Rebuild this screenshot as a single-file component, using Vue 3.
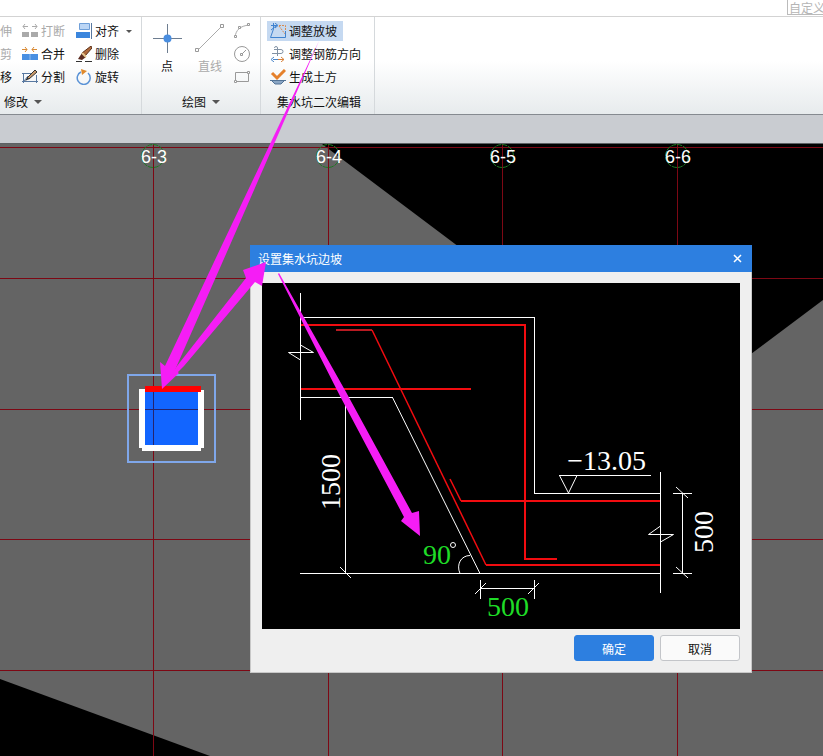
<script setup>
import { ref } from 'vue';

const search = ref('')
const opened = ref(true)
const active = ref('slope')

const columns = [153, 328, 502, 677]
const rows = [3, 134, 265, 395, 526]
const axes = ['6-3', '6-4', '6-5', '6-6']

function openDialog() {
    active.value = 'slope'
    opened.value = true
}

function closeDialog() {
    opened.value = false
}
</script>

<template>
    <div class="page">
        <header class="top">
            <input v-model="search" class="search" type="text" placeholder="自定义" aria-label="自定义">
        </header>

        <nav class="ribbon">
            <section class="group modify">
                <div class="tools">
                    <div class="col first">
                        <button class="tool" disabled>伸</button>
                        <button class="tool" disabled>剪</button>
                        <button class="tool">移</button>
                    </div>
                    <div class="col second">
                        <button class="tool" disabled>
                            <svg width="16" height="16" viewBox="0 0 16 16">
                                <path d="M0 9h7v5H0zM9 9h7v5H9z" fill="#aaa" />
                                <path d="M1 3.500h5M3 1L1 3.500 3 6M10 3.500h5M13 1l2 2.500L13 6" fill="none" stroke="#aaa" />
                            </svg>打断
                        </button>
                        <button class="tool">
                            <svg width="16" height="16" viewBox="0 0 16 16">
                                <path d="M0 8h16v6H0z" fill="#4a90e2" />
                                <path d="M8 8v6" stroke="#8fbdf0" />
                                <path d="M0 3.500h5M3 1l2 2.500L3 6M10 3.500h5M12 1l-2 2.500L12 6" fill="none" stroke="#d98a35" />
                            </svg>合并
                        </button>
                        <button class="tool">
                            <svg width="16" height="16" viewBox="0 0 16 16">
                                <path d="M0 4.500h9M0 12.500h16M1.500 4v10M14.500 6v8M2 12l4-5" fill="none" stroke="#5878a0" />
                                <path d="M5 9l8-8 2 2-8 7z" fill="#c99a6a" stroke="#333" />
                                <path d="M3 12l2-3 2 1z" fill="#222" />
                            </svg>分割
                        </button>
                    </div>
                    <div class="col third">
                        <button class="tool">
                            <svg width="16" height="16" viewBox="0 0 16 16">
                                <path d="M3.500.500h10v6h-10z" fill="#bcd6f5" stroke="#6f9fd8" />
                                <path d="M0 9h14v6H0z" fill="#3b86dd" />
                                <path d="M15.500 0v16" stroke="#5878a0" />
                            </svg>对齐<i class="caret"></i>
                        </button>
                        <button class="tool">
                            <svg width="16" height="16" viewBox="0 0 16 16">
                                <path d="M15 0l1 2-7 8-3-3z" fill="#b06a3c" stroke="#5a3018" />
                                <path d="M6 7l4 4-4 3-4-1z" fill="#5c2c20" />
                                <path d="M6 7l4 4" stroke="#e8c890" stroke-width="2" />
                                <path d="M0 15.500h6M9 15.500h7" stroke="#333" />
                            </svg>删除
                        </button>
                        <button class="tool">
                            <svg width="16" height="16" viewBox="0 0 16 16">
                                <path d="M5 3a6.500 6.500 0 1 0 7 1" fill="none" stroke="#5b93d6" stroke-width="1.500" />
                                <path d="M5 0l6 2-5 4z" fill="#e08a2c" />
                            </svg>旋转
                        </button>
                    </div>
                </div>
                <button class="caption">修改<i class="caret big"></i></button>
            </section>

            <section class="group draw">
                <div class="tools">
                    <button class="large">
                        <svg width="30" height="30" viewBox="0 0 30 30">
                            <path d="M15.500 1v29M1 15.500h29" stroke="#6d7d90" />
                            <circle cx="15.500" cy="15.500" r="4" fill="#4a8ee0" />
                        </svg>
                        <span>点</span>
                    </button>
                    <button class="large" disabled>
                        <svg width="30" height="30" viewBox="0 0 30 30">
                            <path d="M3 27L27 3" stroke="#aaa" />
                            <path d="M.5 25.500h3v3h-3zM25.500 1.500h3v3h-3z" fill="#fff" stroke="#999" />
                        </svg>
                        <span>直线</span>
                    </button>
                    <div class="col shapes">
                        <button class="tool" disabled aria-label="弧">
                            <svg width="18" height="18" viewBox="0 0 18 18">
                                <path d="M2 15C3 8 7 4 16 3" fill="none" stroke="#aaa" />
                                <path d="M1.500 13.500h2v2h-2zM5.500 4.500h2v2h-2zM14.500 1.500h2v2h-2z" fill="#fff" stroke="#999" />
                            </svg>
                        </button>
                        <button class="tool" disabled aria-label="圆">
                            <svg width="18" height="18" viewBox="0 0 18 18">
                                <circle cx="9" cy="9" r="7.500" fill="none" stroke="#999" />
                                <path d="M9 9l4-4" stroke="#999" />
                                <path d="M7.500 8.500h2v2h-2z" fill="#fff" stroke="#999" />
                            </svg>
                        </button>
                        <button class="tool" disabled aria-label="矩形">
                            <svg width="18" height="18" viewBox="0 0 18 18">
                                <path d="M2.500 4.500h13v9h-13z" fill="none" stroke="#999" />
                                <path d="M1.500 12.500h2v2h-2zM14.500 3.500h2v2h-2z" fill="#fff" stroke="#999" />
                            </svg>
                        </button>
                    </div>
                </div>
                <button class="caption">绘图<i class="caret big"></i></button>
            </section>

            <section class="group pit">
                <div class="tools">
                    <div class="col">
                        <button class="tool" :class="{ active: active == 'slope' }" @click="openDialog()">
                            <svg width="16" height="16" viewBox="0 0 16 16">
                                <path d="M1 2.500h6M3.500 0v6L.5 14.500h15V8" fill="none" stroke="#3f82cf" />
                                <path d="M1 7l5-4M5 0l3 2.500L5 5" fill="none" stroke="#3f82cf" />
                                <path d="M9 2.500h6.500V8M9 3l6 8" fill="none" stroke="#d88b50" stroke-dasharray="2 1" />
                            </svg>调整放坡
                        </button>
                        <button class="tool">
                            <svg width="16" height="16" viewBox="0 0 16 16">
                                <path d="M2 7.500h9a2 2 0 0 0 0-4H4M7.500 10V2a1.500 1.500 0 0 0-3 0" fill="none" stroke="#8292a4" />
                                <path d="M3 13.500h11" stroke="#4b86c9" />
                                <path d="M4 11l-3 2.500L4 16" fill="none" stroke="#4b86c9" />
                                <path d="M8 13.500h6M11 11l3 2.500-3 2.500" fill="none" stroke="#d9823b" />
                            </svg>调整钢筋方向
                        </button>
                        <button class="tool">
                            <svg width="16" height="16" viewBox="0 0 16 16">
                                <path d="M0 11.500h16M2 12l3 3h6l3-3" fill="#8ba6c4" stroke="#527396" />
                                <path d="M2 4l5 5 8-8" fill="none" stroke="#e5812c" stroke-width="3" />
                            </svg>生成土方
                        </button>
                    </div>
                </div>
                <div class="caption">集水坑二次编辑</div>
            </section>
        </nav>

        <div class="band"></div>

        <main class="workspace">
            <svg class="model" width="100%" height="100%">
                <polygon points="322,0 3000,0 3000,-1480 823,156 676,266" fill="#000" />
                <polygon points="0,535 900,865 0,865" fill="#000" />
                <g fill="#7d0814">
                    <rect v-for="x in columns" :key="x" :x="x" y="0" width="1" height="100%" />
                    <rect v-for="y in rows" :key="y" x="0" :y="y" width="100%" height="1" />
                </g>
                <g v-for="(name, i) in axes" :key="name">
                    <circle :cx="columns[i]" cy="12" r="11.500" fill="none" stroke="#1c7a22" stroke-dasharray="5 1" />
                    <text class="axis" :x="columns[i] + 1" y="19">{{ name }}</text>
                </g>
                <g shape-rendering="crispEdges">
                    <rect x="128" y="231" width="87" height="87" fill="none" stroke="#7fa7ea" stroke-width="2" />
                    <path d="M139 245h6v56h53v-55h6v58h-3v3h-59v-3h-3z" fill="#fff" />
                    <rect x="145" y="247" width="53" height="54" fill="#1265ff" />
                    <path d="M153.500 247v54M145 265.500h53" stroke="#25246e" />
                    <rect x="145" y="242" width="56" height="6" fill="#f00" />
                </g>
            </svg>

            <section v-if="opened" class="dialog" role="dialog" aria-labelledby="dialog-title">
                <div class="title">
                    <span id="dialog-title">设置集水坑边坡</span>
                    <button class="close" aria-label="关闭" @click="closeDialog()">
                        <svg width="9" height="9" viewBox="0 0 9 9">
                            <path d="M1 1l7 7M8 1L1 8" stroke="#fff" stroke-width="1.500" />
                        </svg>
                    </button>
                </div>
                <div class="body">
                    <svg class="section" viewBox="262 283 478 346">
                        <rect x="262" y="283" width="478" height="346" fill="#000" />
                        <g fill="none" stroke="#fff" shape-rendering="crispEdges">
                            <path d="M300.500 293v127M300.500 317.500h234v176h126M300.500 397.500h92" />
                            <path d="M300 573.500h361M660.500 472v121M345.500 398v176" />
                            <path d="M480.500 580v19M534.500 580v19M480 588.500h55" />
                            <path d="M682.500 493v80M673 493.500h19M673 573.500h19" />
                            <path d="M559 475.500h92" />
                        </g>
                        <g fill="none" stroke="#fff">
                            <path d="M392.500 397.500L480 573.500" />
                            <path d="M300.500 345l13 7.500h-25l12 7.500" />
                            <path d="M660.500 526l-12 8.500h25l-13 7.500" />
                            <path d="M340 567l11 11M676 487l12 11M676 567l12 11" />
                            <path d="M475 594l11-11M528 594l11-11" />
                            <path d="M559.500 475.500l9 17.500 8.500-17.500" />
                            <path d="M470 555.500c-9 0-14 9-10 18" />
                            <circle cx="453" cy="545" r="2.500" />
                        </g>
                        <g fill="none" stroke="#f20c10" stroke-width="2">
                            <path d="M301 325h224v234h32M301 389h170" />
                            <path d="M336 330h36" stroke="#b91b22" />
                            <path d="M372 330l114 235" stroke-width="1.500" />
                            <path d="M450 479l11 22" stroke-width="1.500" />
                            <path d="M461 501h199M486 565h174" />
                        </g>
                        <g class="dim">
                            <text x="646" y="470" text-anchor="end">−13.05</text>
                            <text x="423" y="564" class="edit">90</text>
                            <text x="487" y="616" class="edit">500</text>
                            <text transform="translate(340 510) rotate(-90)">1500</text>
                            <text transform="translate(713 553) rotate(-90)">500</text>
                        </g>
                    </svg>
                    <div class="actions">
                        <button class="btn primary" @click="closeDialog()">确定</button>
                        <button class="btn" @click="closeDialog()">取消</button>
                    </div>
                </div>
            </section>
        </main>

        <svg class="arrows" width="100%" height="100%" fill="#f51df5">
            <path d="M319 41L230 245l-55 125 4 3-17 16-2-27 5 4 57-121z" />
            <path d="M162 388l15-22 69-88-3-8 23-8-4 24-7-4-71 84z" />
            <path d="M278 274l1-1 67 119 66 121 7-2 1 25-19-15 3-4-64-121z" />
        </svg>
    </div>
</template>

<style>
body {
    margin: 0;
}
</style>

<style scoped>
.page {
    position: relative;
    display: flex;
    flex-direction: column;
    min-height: 100vh;
    overflow: hidden;
    font-family: "Noto Sans CJK SC", sans-serif;
    font-size: 12px;
    color: #111;
    background: #fff;
}

button {
    padding: 0;
    border: 0;
    background: none;
    font: inherit;
    color: inherit;
    white-space: nowrap;
}

button:disabled {
    color: #aaa;
}

svg {
    display: block;
    flex-shrink: 0;
}

.top {
    display: flex;
    justify-content: flex-end;
    align-items: flex-start;
    height: 16px;
    border-bottom: 1px solid #d3d3d3;
}

.search {
    box-sizing: border-box;
    width: 36px;
    height: 15px;
    padding: 0 0 0 1px;
    border: 1px solid #bbb;
    border-top: 0;
    border-right: 0;
    font: inherit;
    line-height: 14px;
}

.search::placeholder {
    color: #b5b5b5;
}

.ribbon {
    display: flex;
    height: 97px;
    border-bottom: 1px solid #858a90;
    background: linear-gradient(#fff 45%, #e7ebed);
}

.group {
    box-sizing: border-box;
    display: flex;
    flex-direction: column;
    padding-top: 3px;
    border-right: 1px solid #d5d9dc;
}

.modify {
    width: 142px;
}

.draw {
    width: 119px;
}

.pit {
    width: 114px;
}

.tools {
    display: flex;
    height: 70px;
}

.col {
    display: flex;
    flex-direction: column;
    align-items: flex-start;
    gap: 3px;
    padding-top: 1px;
}

.second {
    margin-left: 10px;
}

.third {
    margin-left: 11px;
}

.tool {
    display: flex;
    align-items: center;
    gap: 3px;
    height: 20px;
    line-height: 20px;
}

.pit .col {
    padding-left: 6px;
}

.pit .tool {
    padding: 0 6px 0 3px;
}

.pit .active {
    background: #c5d9f1;
}

.large {
    display: flex;
    flex-direction: column;
    align-items: center;
    gap: 4px;
    padding-top: 3px;
    line-height: 18px;
}

.draw .tools {
    padding-left: 10px;
    gap: 13px;
}

.shapes {
    margin-left: -5px;
}

.caption {
    display: flex;
    align-items: center;
    gap: 6px;
    height: 24px;
    line-height: 24px;
}

.modify .caption {
    padding-left: 4px;
}

.draw .caption {
    justify-content: center;
}

.pit .caption {
    padding-left: 16px;
}

.caret {
    margin-left: 4px;
    border: 3px solid transparent;
    border-top-color: #555;
    border-bottom: 0;
}

.big {
    margin-left: 0;
    border-width: 4px;
    border-bottom: 0;
}

.band {
    height: 28px;
    border-bottom: 1px solid #5d6063;
    background: #c9ccd1;
}

.workspace {
    position: relative;
    flex: 1;
    min-height: 540px;
    background: #646464;
}

.model {
    position: absolute;
    inset: 0;
}

.axis {
    font-family: "Liberation Sans", sans-serif;
    font-size: 18px;
    fill: #fff;
    text-anchor: middle;
}

.dialog {
    position: absolute;
    top: 101px;
    left: 250px;
    box-sizing: border-box;
    width: 502px;
    background: #efefef;
}

.title {
    display: flex;
    justify-content: space-between;
    align-items: center;
    height: 27px;
    padding: 0 10px 0 8px;
    color: #fff;
    background: #2d7fe0;
}

.body {
    padding: 11px;
    border: 1px solid #c8c8c8;
    border-top: 0;
}

.section {
    width: 100%;
}

.dim {
    font-family: "Liberation Serif", serif;
    font-size: 28px;
    fill: #fff;
}

.edit {
    fill: #1fdc27;
}

.actions {
    display: flex;
    justify-content: flex-end;
    gap: 6px;
    margin-top: 6px;
}

.btn {
    box-sizing: border-box;
    width: 80px;
    height: 26px;
    border: 1px solid #c3c5c9;
    border-radius: 3px;
    background: #fafafa;
}

.primary {
    border-color: #2d7fe0;
    color: #fff;
    background: #2d7fe0;
}

.arrows {
    position: absolute;
    inset: 0;
    pointer-events: none;
}
</style>
